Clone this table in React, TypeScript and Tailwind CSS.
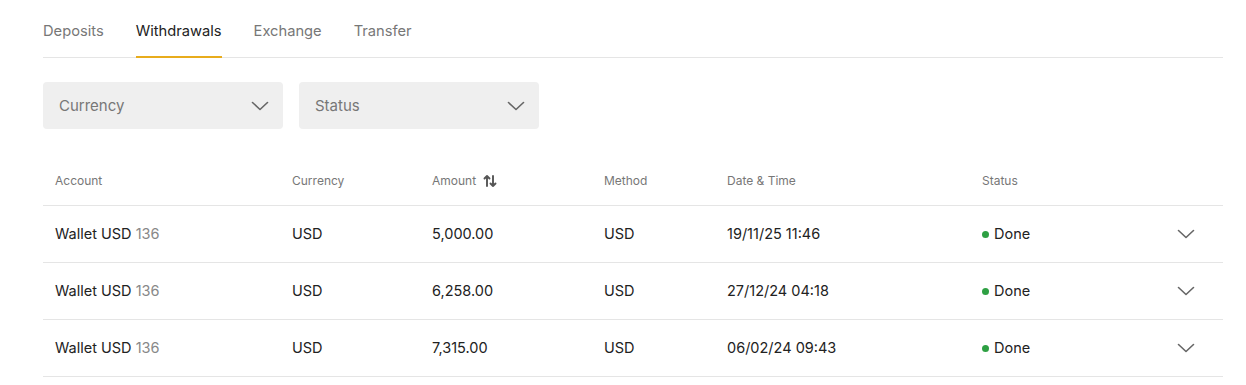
const tabs = ['Deposits', 'Withdrawals', 'Exchange', 'Transfer'];

const rows = [
  { amount: '5,000.00', date: '19/11/25 11:46' },
  { amount: '6,258.00', date: '27/12/24 04:18' },
  { amount: '7,315.00', date: '06/02/24 09:43' },
];

const cols = 'grid grid-cols-[237px_140px_172px_123px_255px_1fr_60px] items-center';

function SortIcon() {
  return (
    <svg width="14" height="14" viewBox="0 0 14 14" fill="none" stroke="#555" strokeWidth="1.9" strokeLinecap="round" strokeLinejoin="round">
      <path d="M4 12V2M1.5 4.5 4 2l2.5 2.5" />
      <path d="M10 2v10M7.5 9.5 10 12l2.5-2.5" />
    </svg>
  );
}

function Chevron() {
  return (
    <svg width="18" height="10" viewBox="0 0 18 10" fill="none" stroke="#666" strokeWidth="1.6" strokeLinecap="round" strokeLinejoin="round">
      <path d="M1.5 1.5 9 8.5l7.5-7" />
    </svg>
  );
}

export default function App() {
  return (
    <div className="min-h-[385px] bg-white pl-[43px] pr-[23px] font-['Inter',sans-serif] text-[#222]">
      <div className="flex gap-8 border-b border-[#e5e5e5] pt-[21px]">
        {tabs.map((tab) => (
          <div
            key={tab}
            className={
              tab === 'Withdrawals'
                ? '-mb-px border-b-2 border-[#e8ac1c] pb-[15px] text-[14.7px] leading-5 text-[#222]'
                : '-mb-px border-b-2 border-transparent pb-[15px] text-[14.7px] leading-5 text-[#777]'
            }
          >
            {tab}
          </div>
        ))}
      </div>

      <div className="mt-6 flex gap-4">
        {['Currency', 'Status'].map((label) => (
          <div
            key={label}
            className="flex h-[47px] w-[240px] items-center justify-between rounded bg-[#efefef] pl-4 pr-[14px] pt-px text-[15px] text-[#777]"
          >
            <span>{label}</span>
            <Chevron />
          </div>
        ))}
      </div>

      <div className="mt-[34px]">
        <div className={`${cols} h-[43px] border-b border-[#e5e5e5] pb-[6px] text-[12px] text-[#777]`}>
          <div className="pl-3">Account</div>
          <div className="pl-3">Currency</div>
          <div className="flex items-center gap-[7px] pl-3">
            Amount
            <SortIcon />
          </div>
          <div className="pl-3">Method</div>
          <div className="pl-3">Date &amp; Time</div>
          <div className="pl-3">Status</div>
          <div />
        </div>
        {rows.map((row) => (
          <div key={row.date} className={`${cols} h-[57px] border-b border-[#e5e5e5] text-[14.5px]`}>
            <div className="pl-3">
              Wallet USD <span className="text-[#888]">136</span>
            </div>
            <div className="pl-3">USD</div>
            <div className="pl-3">{row.amount}</div>
            <div className="pl-3">USD</div>
            <div className="pl-3">{row.date}</div>
            <div className="flex items-center gap-[5px] pl-3">
              <span className="h-[7px] w-[7px] rounded-full bg-[#2ea043]" />
              Done
            </div>
            <div className="flex justify-end pr-[28px]">
              <Chevron />
            </div>
          </div>
        ))}
      </div>
    </div>
  );
}
